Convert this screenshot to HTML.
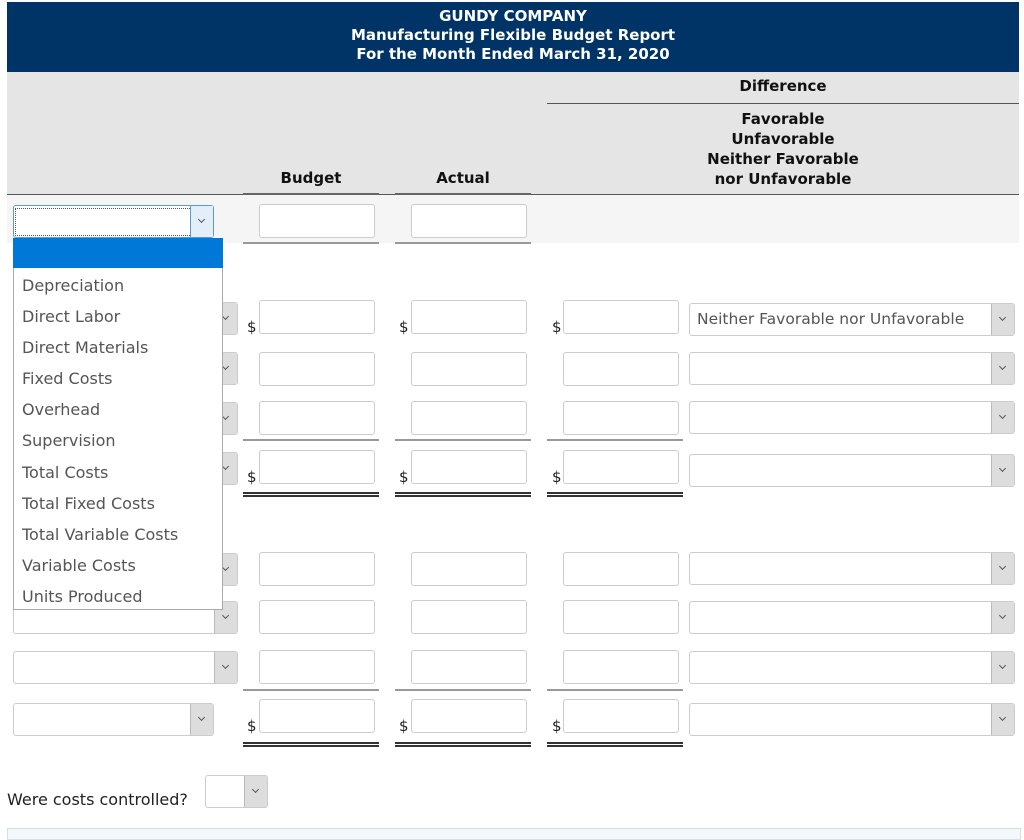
<!DOCTYPE html>
<html><head><style>
body{margin:0;width:1024px;height:834px;background:#fff;font-family:"DejaVu Sans","Liberation Sans",sans-serif;position:relative;overflow:hidden;color:#222}
.a{position:absolute}
.hdr{left:7px;top:2px;width:1012px;height:70px;background:#003366;color:#fff;text-align:center;font-weight:bold;font-size:15px;line-height:19px;padding-top:5px;box-sizing:border-box}
.inp{position:absolute;width:116px;height:34px;border:1px solid #ccc;border-radius:3px;background:#fff;box-sizing:border-box}
.sel{position:absolute;height:33px;border:1px solid #ccc;border-radius:3px;background:#fff;box-sizing:border-box;font-size:15px;color:#555;line-height:31px;padding-left:7px}
.sel .b{position:absolute;right:0;top:0;width:22px;height:31px;background:#ddd;border-left:1px solid #bbb}
.sel .b:after{content:"";position:absolute;left:8px;top:11px;width:4px;height:4px;border-right:1px solid #555;border-bottom:1px solid #555;transform:rotate(45deg)}
.ln{position:absolute;height:2px;background:#999}
.dl{position:absolute;height:5px;border-top:2px solid #333;border-bottom:2px solid #333;box-sizing:border-box}
.d{position:absolute;font-size:15px;color:#222}
.th{position:absolute;font-weight:bold;font-size:15px;text-align:center;color:#111}
</style></head><body>
<div class="a hdr">GUNDY COMPANY<br>Manufacturing Flexible Budget Report<br>For the Month Ended March 31, 2020</div>
<div class="a" style="left:7px;top:72px;width:1012px;height:122px;background:#e5e5e5"></div>
<div class="a" style="left:547px;top:103px;width:472px;height:1px;background:#555"></div>
<div class="th" style="left:547px;top:77px;width:472px">Difference</div>
<div class="th" style="left:547px;top:109px;width:472px;line-height:20px">Favorable<br>Unfavorable<br>Neither Favorable<br>nor Unfavorable</div>
<div class="th" style="left:243px;top:169px;width:136px">Budget</div>
<div class="th" style="left:395px;top:169px;width:136px">Actual</div>
<div class="a" style="left:7px;top:194px;width:1012px;height:1px;background:#555"></div>
<div class="a" style="left:7px;top:195px;width:1012px;height:48px;background:#f5f5f5"></div>
<div class="a" style="left:243px;top:193px;width:136px;height:2px;background:#666"></div>
<div class="a" style="left:395px;top:193px;width:136px;height:2px;background:#666"></div>

<div class="sel" style="left:13px;top:205px;width:201px;border-color:#5b9bd5"><div class="a" style="left:1px;top:2px;width:175px;height:26px;border:1px dotted #555"></div><div class="b" style="background:#e3eefa;border-left-color:#5b9bd5"></div></div>
<div class="inp" style="left:259px;top:204px"></div>
<div class="inp" style="left:411px;top:204px"></div>
<div class="ln" style="left:243px;top:242px;width:136px"></div>
<div class="ln" style="left:395px;top:242px;width:136px"></div>

<div class="sel" style="left:13px;top:302px;width:225px"><div class="b"></div></div>
<div class="sel" style="left:13px;top:352px;width:225px"><div class="b"></div></div>
<div class="sel" style="left:13px;top:402px;width:225px"><div class="b"></div></div>
<div class="sel" style="left:13px;top:452px;width:225px"><div class="b"></div></div>
<div class="sel" style="left:13px;top:553px;width:225px"><div class="b"></div></div>
<div class="sel" style="left:13px;top:601px;width:225px"><div class="b"></div></div>
<div class="sel" style="left:13px;top:651px;width:225px"><div class="b"></div></div>
<div class="sel" style="left:13px;top:703px;width:201px"><div class="b"></div></div>

<div class="inp" style="left:259px;top:300px"></div><div class="inp" style="left:411px;top:300px"></div><div class="inp" style="left:563px;top:300px"></div>
<div class="inp" style="left:259px;top:352px"></div><div class="inp" style="left:411px;top:352px"></div><div class="inp" style="left:563px;top:352px"></div>
<div class="inp" style="left:259px;top:401px"></div><div class="inp" style="left:411px;top:401px"></div><div class="inp" style="left:563px;top:401px"></div>
<div class="inp" style="left:259px;top:450px"></div><div class="inp" style="left:411px;top:450px"></div><div class="inp" style="left:563px;top:450px"></div>
<div class="inp" style="left:259px;top:552px"></div><div class="inp" style="left:411px;top:552px"></div><div class="inp" style="left:563px;top:552px"></div>
<div class="inp" style="left:259px;top:600px"></div><div class="inp" style="left:411px;top:600px"></div><div class="inp" style="left:563px;top:600px"></div>
<div class="inp" style="left:259px;top:650px"></div><div class="inp" style="left:411px;top:650px"></div><div class="inp" style="left:563px;top:650px"></div>
<div class="inp" style="left:259px;top:699px"></div><div class="inp" style="left:411px;top:699px"></div><div class="inp" style="left:563px;top:699px"></div>

<div class="d" style="left:247px;top:318px">$</div><div class="d" style="left:399px;top:318px">$</div><div class="d" style="left:552px;top:318px">$</div>
<div class="d" style="left:247px;top:468px">$</div><div class="d" style="left:399px;top:468px">$</div><div class="d" style="left:552px;top:468px">$</div>
<div class="d" style="left:247px;top:717px">$</div><div class="d" style="left:399px;top:717px">$</div><div class="d" style="left:552px;top:717px">$</div>

<div class="ln" style="left:243px;top:439px;width:136px"></div><div class="ln" style="left:395px;top:439px;width:136px"></div><div class="ln" style="left:547px;top:439px;width:136px"></div>
<div class="dl" style="left:243px;top:492px;width:136px"></div><div class="dl" style="left:395px;top:492px;width:136px"></div><div class="dl" style="left:547px;top:492px;width:136px"></div>
<div class="ln" style="left:243px;top:689px;width:136px"></div><div class="ln" style="left:395px;top:689px;width:136px"></div><div class="ln" style="left:547px;top:689px;width:136px"></div>
<div class="dl" style="left:243px;top:742px;width:136px"></div><div class="dl" style="left:395px;top:742px;width:136px"></div><div class="dl" style="left:547px;top:742px;width:136px"></div>

<div class="sel" style="left:689px;top:303px;width:326px;font-size:15.5px">Neither Favorable nor Unfavorable<div class="b"></div></div>
<div class="sel" style="left:689px;top:352px;width:326px"><div class="b"></div></div>
<div class="sel" style="left:689px;top:401px;width:326px"><div class="b"></div></div>
<div class="sel" style="left:689px;top:454px;width:326px"><div class="b"></div></div>
<div class="sel" style="left:689px;top:552px;width:326px"><div class="b"></div></div>
<div class="sel" style="left:689px;top:601px;width:326px"><div class="b"></div></div>
<div class="sel" style="left:689px;top:651px;width:326px"><div class="b"></div></div>
<div class="sel" style="left:689px;top:703px;width:326px"><div class="b"></div></div>

<div class="a" style="left:13px;top:238px;width:210px;height:372px;background:#fff;border:1px solid #aaa;box-sizing:border-box;font-size:16px;color:#555">
<div style="height:30px;background:#0078d7;margin:-1px -1px 0 -1px"></div>
<div style="position:absolute;left:8px;top:31px;line-height:31.1px">Depreciation<br>Direct Labor<br>Direct Materials<br>Fixed Costs<br>Overhead<br>Supervision<br>Total Costs<br>Total Fixed Costs<br>Total Variable Costs<br>Variable Costs<br>Units Produced</div>
</div>

<div class="a" style="left:7px;top:790px;font-size:16px;color:#222">Were costs controlled?</div>
<div class="sel" style="left:205px;top:775px;width:63px"><div class="b"></div></div>
<div class="a" style="left:7px;top:828px;width:1012px;height:10px;border:1px solid #d5dde5;background:#f5f8fb"></div>
</body></html>
